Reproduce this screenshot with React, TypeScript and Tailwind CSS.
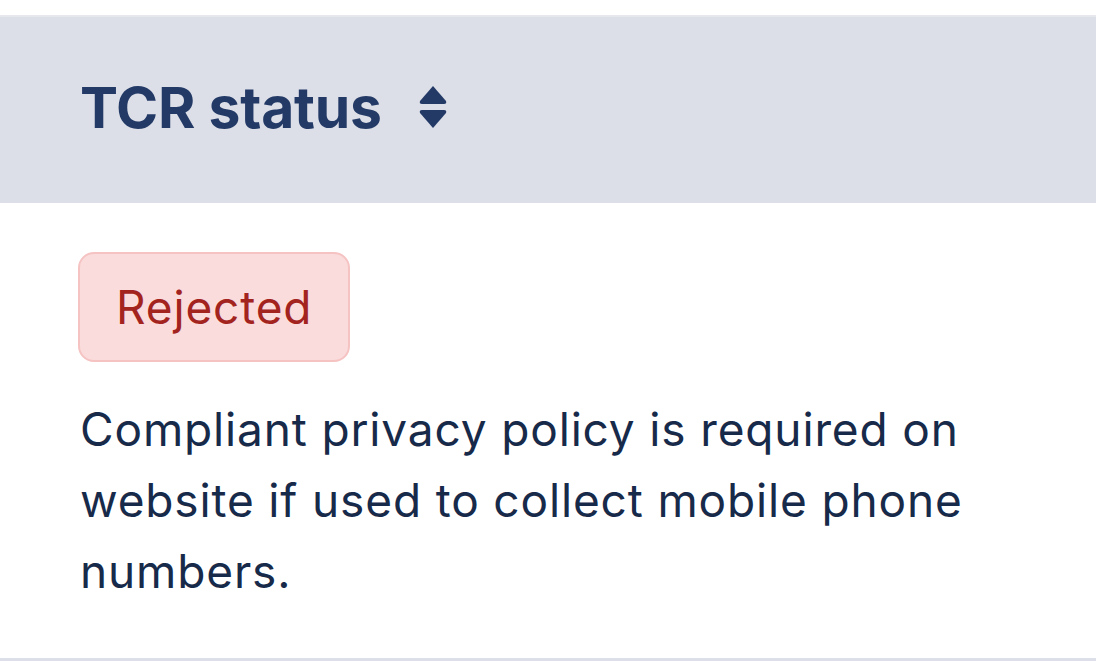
const SortIcon = () => (
  <svg width="30" height="44" viewBox="0 0 30 44" className="text-[#243a66]">
    <path d="M15 1 L28 16 Q29 19 26 19 L4 19 Q1 19 2 16 Z" fill="currentColor" />
    <path d="M4 25 L26 25 Q29 25 28 28 L15 43 L2 28 Q1 25 4 25 Z" fill="currentColor" />
  </svg>
);

const App = () => {
  return (
    <div className="min-h-screen bg-white pt-[15px]" style={{ fontFamily: "Inter, 'Noto Sans', sans-serif" }}>
      <div className="border-t-2 border-[#e6e8ee] bg-[#dcdfe8] h-[188px] flex items-center px-[80px]">
        <h2 className="text-[57px] font-bold text-[#243a66] tracking-[-0.2px] mt-[-4px]">TCR status</h2>
        <span className="ml-[36px] mt-[-6px]">
          <SortIcon />
        </span>
      </div>
      <div className="border-b-[3px] border-[#dcdfe8] px-[80px] pt-[49px] pb-[51px]">
        <span className="-ml-[2px] inline-flex items-center h-[110px] px-[36px] rounded-[16px] border-2 border-[#f6c3c3] bg-[#fadcdc] text-[46px] tracking-[0.85px] text-[#a3231f]">
          Rejected
        </span>
        <p className="mt-[32px] text-[46px] tracking-[0.85px] leading-[71px] text-[#172a4a] max-w-[940px]">
          Compliant privacy policy is required on website if used to collect mobile phone numbers.
        </p>
      </div>
    </div>
  );
};

export default App;
